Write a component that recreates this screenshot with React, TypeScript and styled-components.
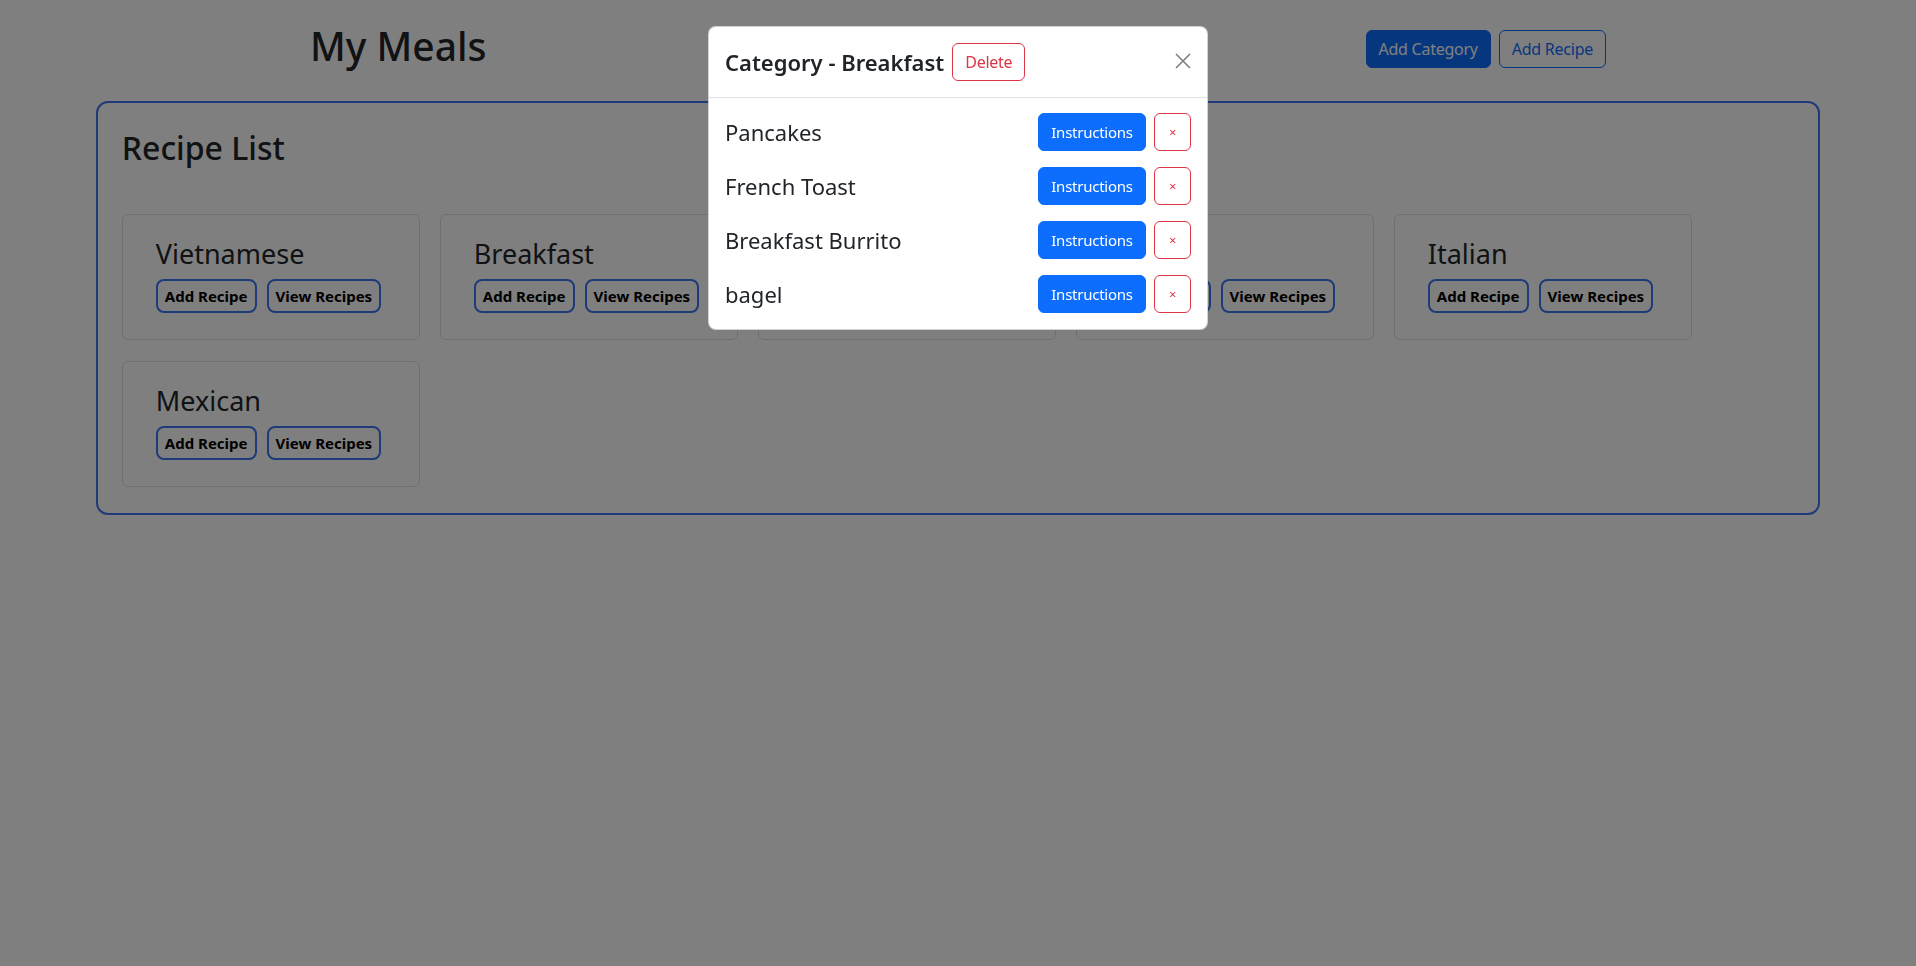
import React from "react";
import styled, { createGlobalStyle } from "styled-components";

const GlobalStyle = createGlobalStyle`
  body {
    margin: 0;
    background: #ffffff;
    color: #212529;
    font-family: "Noto Sans", "Open Sans", sans-serif;
    font-size: 16px;
    line-height: 1.5;
  }
`

const Page = styled.div`
  min-height: 966px;
`

const Header = styled.header`
  max-width: 1296px;
  margin: 0 auto 31px;
  padding: 23px 12px 0;
  display: flex;
  justify-content: space-between;
  align-items: flex-start;
`

const PageTitle = styled.h1`
  margin: 0;
  font-size: 39px;
  font-weight: 500;
  line-height: 1.2;
`

const HeaderActions = styled.div`
  display: flex;
  gap: 8px;
  margin-top: 7px;
`

const BsButton = styled.button<{ $variant: "primary" | "outline-primary" | "outline-danger" }>`
  font-family: inherit;
  font-size: 16px;
  line-height: 24px;
  letter-spacing: -0.25px;
  padding: 6px 12px;
  border-radius: 6px;
  border: 1px solid ${p => (p.$variant === "outline-danger" ? "#dc3545" : "#0d6efd")};
  background: ${p => (p.$variant === "primary" ? "#0d6efd" : "transparent")};
  color: ${p => (p.$variant === "primary" ? "#ffffff" : p.$variant === "outline-danger" ? "#dc3545" : "#0d6efd")};
  cursor: pointer;
`

const RecipeBox = styled.section`
  width: 90%;
  margin: 0 auto;
  box-sizing: border-box;
  border: 2px solid #3d74f0;
  border-radius: 12px;
  padding: 26px 24px 26px 24px;
`

const BoxTitle = styled.h2`
  margin: 0 0 47px;
  font-size: 32px;
  font-weight: 500;
  line-height: 1.2;
`

const CardGrid = styled.div`
  display: flex;
  flex-wrap: wrap;
  gap: 21px 20px;
`

const CategoryCard = styled.div`
  width: 298px;
  height: 126px;
  box-sizing: border-box;
  border: 1px solid rgba(0, 0, 0, 0.13);
  border-radius: 6px;
  padding: 23px 16px 0 33px;
`

const CardTitle = styled.h3`
  margin: 0 0 8px;
  font-size: 27px;
  font-weight: 400;
  line-height: 1.2;
`

const CardActions = styled.div`
  display: flex;
  gap: 10px;
`

const CardButton = styled.button`
  font-family: inherit;
  font-size: 15px;
  font-weight: 700;
  line-height: 24px;
  color: #000000;
  background: transparent;
  border: 2px solid #3d74f0;
  border-radius: 8px;
  padding: 3px 7px;
  cursor: pointer;
`

const Backdrop = styled.div`
  position: fixed;
  inset: 0;
  background: rgba(0, 0, 0, 0.5);
`

const ModalDialog = styled.div`
  position: fixed;
  top: 26px;
  left: 50%;
  width: 500px;
  margin-left: -250px;
  box-sizing: border-box;
  background: #ffffff;
  border: 1px solid rgba(0, 0, 0, 0.175);
  border-radius: 8px;
`

const ModalHeader = styled.div`
  display: flex;
  align-items: center;
  padding: 16px;
  border-bottom: 1px solid #dee2e6;
`

const ModalTitle = styled.h4`
  margin: 0 8px 0 0;
  font-size: 22px;
  font-weight: 600;
  line-height: 1.5;
`

const CloseButton = styled.button`
  margin-left: auto;
  margin-right: -4px;
  margin-top: -3px;
  width: 24px;
  height: 24px;
  padding: 0;
  border: 0;
  background: transparent;
  display: flex;
  align-items: center;
  justify-content: center;
  opacity: 0.5;
  cursor: pointer;
`

const ModalBody = styled.div`
  padding: 15px 16px 16px;
  display: flex;
  flex-direction: column;
  gap: 16px;
`

const RecipeRow = styled.div`
  display: flex;
  align-items: center;
  gap: 8px;
`

const RecipeName = styled.span`
  flex: 1;
  font-size: 22px;
  line-height: 1.2;
`

const InstructionsButton = styled(BsButton)`
  width: 108px;
  padding: 6px 0;
  font-size: 15px;
`

const RemoveButton = styled(BsButton)`
  width: 37px;
  padding: 6px 0;
  font-size: 13px;
`

const categories = ["Vietnamese", "Breakfast", "Korean", "Thai", "Italian", "Mexican"];
const recipes = ["Pancakes", "French Toast", "Breakfast Burrito", "bagel"];

export default function App() {
    return (
        <Page>
            <GlobalStyle />
            <Header>
                <PageTitle>My Meals</PageTitle>
                <HeaderActions>
                    <BsButton $variant="primary">Add Category</BsButton>
                    <BsButton $variant="outline-primary">Add Recipe</BsButton>
                </HeaderActions>
            </Header>
            <RecipeBox>
                <BoxTitle>Recipe List</BoxTitle>
                <CardGrid>
                    {categories.map(name => (
                        <CategoryCard key={name}>
                            <CardTitle>{name}</CardTitle>
                            <CardActions>
                                <CardButton>Add Recipe</CardButton>
                                <CardButton>View Recipes</CardButton>
                            </CardActions>
                        </CategoryCard>
                    ))}
                </CardGrid>
            </RecipeBox>

            <Backdrop />
            <ModalDialog>
                <ModalHeader>
                    <ModalTitle>Category - Breakfast</ModalTitle>
                    <BsButton $variant="outline-danger">Delete</BsButton>
                    <CloseButton aria-label="Close">
                        <svg width="16" height="16" viewBox="0 0 16 16">
                            <path d="M1 1 L15 15 M15 1 L1 15" stroke="#000" strokeWidth="1.6" />
                        </svg>
                    </CloseButton>
                </ModalHeader>
                <ModalBody>
                    {recipes.map(r => (
                        <RecipeRow key={r}>
                            <RecipeName>{r}</RecipeName>
                            <InstructionsButton $variant="primary">Instructions</InstructionsButton>
                            <RemoveButton $variant="outline-danger">×</RemoveButton>
                        </RecipeRow>
                    ))}
                </ModalBody>
            </ModalDialog>
        </Page>
    );
}
